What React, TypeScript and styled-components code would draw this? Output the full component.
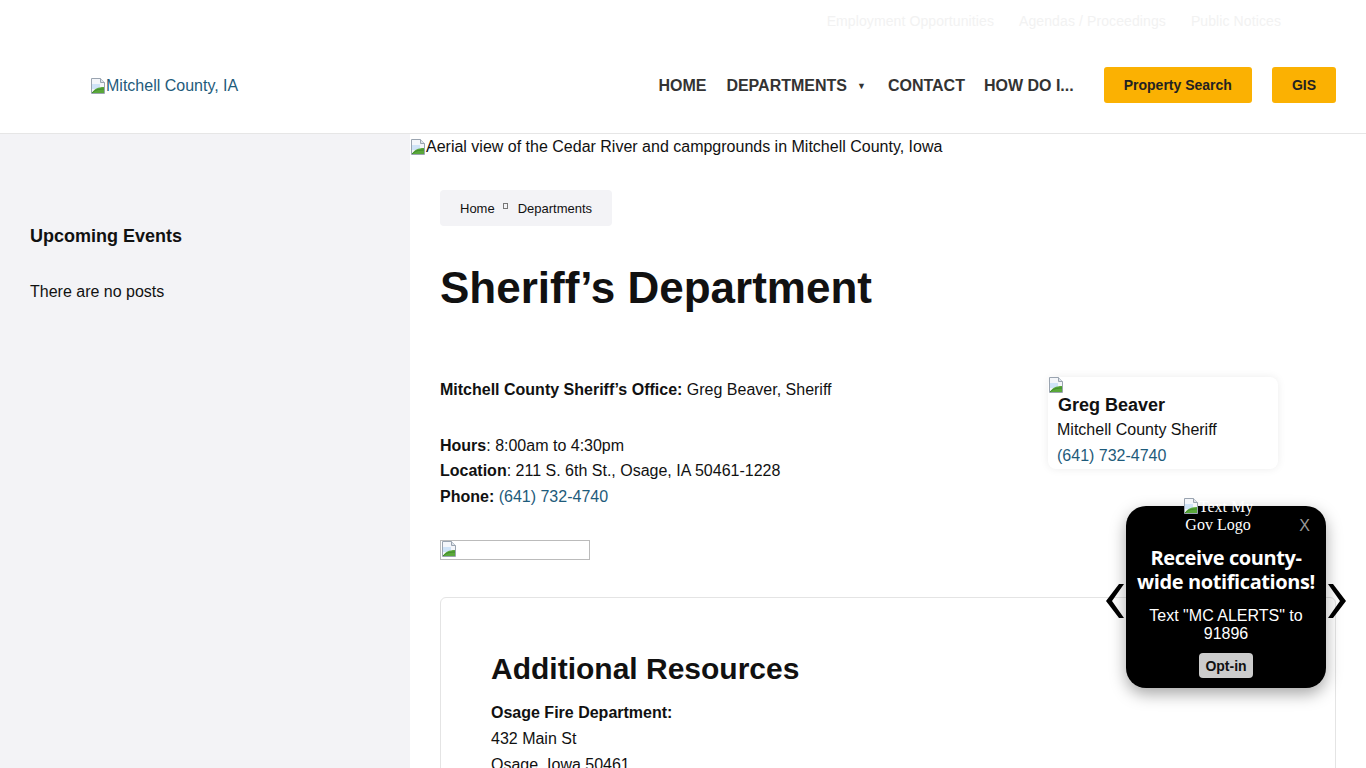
import React from "react";
import styled, { createGlobalStyle } from "styled-components";

const Global = createGlobalStyle`
  html, body { margin: 0; padding: 0; background: #fff; }
  body { font-family: "Liberation Sans", Arial, sans-serif; color: #111; font-size: 16px; overflow: hidden; }
  * { box-sizing: border-box; }
`;

const LINK = "#1e5b7b";

const Page = styled.div`
  width: 1366px;
  height: 768px;
  overflow: hidden;
  position: relative;
`;

const Header = styled.header`
  border-bottom: 1px solid #e6e6e6;
  padding-bottom: 4px;
`;

const TopBar = styled.div`
  height: 42px;
  display: flex;
  justify-content: flex-end;
  align-items: center;
  gap: 25px;
  padding-right: 85px;
`;

const TopLink = styled.a`
  font-size: 14px;
  letter-spacing: 0.1px;
  color: #f2f2f2;
  text-decoration: none;
`;

const NavRow = styled.div`
  height: 87px;
  display: flex;
  align-items: center;
  justify-content: space-between;
  padding: 1px 30px 0 90px;
`;

const Logo = styled.a`
  display: inline-flex;
  align-items: center;
  color: ${LINK};
  font-size: 16px;
  text-decoration: none;
`;

const Nav = styled.nav`
  display: flex;
  align-items: center;
`;

const NavItem = styled.a<{ $gap?: number }>`
  font-size: 16px;
  font-weight: 700;
  color: #333;
  text-transform: uppercase;
  text-decoration: none;
  margin-right: ${(p) => p.$gap ?? 20}px;
  display: inline-flex;
  align-items: center;
`;

const Caret = styled.span`
  font-size: 9px;
  margin-left: 10px;
  color: #333;
`;

const CtaButton = styled.a<{ $last?: boolean }>`
  height: 36px;
  padding: 0 20px;
  background: #fbb102;
  border-radius: 3px;
  font-size: 14px;
  font-weight: 700;
  color: #222;
  display: inline-flex;
  align-items: center;
  text-decoration: none;
  margin: -2px ${(p) => (p.$last ? 0 : 20)}px 0 0;
`;

const Body = styled.div`
  display: flex;
  height: 634px;
`;

const Sidebar = styled.aside`
  width: 410px;
  flex-shrink: 0;
  background: #f3f3f6;
  padding: 90px 30px 0;
`;

const SideTitle = styled.h3`
  margin: 0;
  font-size: 18px;
  font-weight: 700;
  line-height: 24px;
  color: #111;
`;

const SideText = styled.p`
  margin: 32px 0 0;
  font-size: 16px;
  line-height: 24px;
`;

const Main = styled.main`
  flex: 1;
  min-width: 0;
`;

const Hero = styled.div`
  height: 26px;
  display: flex;
  align-items: center;
  font-size: 16px;
  color: #111;
`;

const Content = styled.div`
  padding: 0 30px;
`;

const Crumbs = styled.div`
  margin-top: 30px;
  display: inline-flex;
  align-items: center;
  height: 36px;
  padding: 0 20px;
  background: #f3f3f6;
  border-radius: 4px;
  font-size: 13px;
  color: #111;
`;

const CrumbSep = styled.span`
  display: inline-block;
  width: 5px;
  height: 6px;
  border: 1px solid #777;
  margin: 0 10px 4px 8px;
`;

const Title = styled.h1`
  margin: 35px 0 0;
  font-size: 44px;
  line-height: 53px;
  font-weight: 700;
  color: #111;
`;

const InfoRow = styled.div`
  margin-top: 63px;
  display: flex;
  justify-content: space-between;
  align-items: flex-start;
`;

const Para = styled.p<{ $mt?: number }>`
  margin: ${(p) => p.$mt ?? 0}px 0 0;
  font-size: 16px;
  line-height: 25.6px;
`;

const Link = styled.a`
  color: ${LINK};
  text-decoration: none;
`;

const ProfileCard = styled.div`
  width: 230px;
  margin: 0 58px 0 0;
  background: #fff;
  border-radius: 8px;
  box-shadow: 0 0 8px rgba(0, 0, 0, 0.08);
  padding-bottom: 1px;
`;

const ProfileBody = styled.div`
  padding: 0 10px 0 9px;
`;

const ProfileName = styled.div`
  font-size: 18px;
  font-weight: 700;
  line-height: 24px;
  padding-left: 1px;
`;

const Placeholder = styled.div`
  margin-top: 31px;
  width: 150px;
  height: 20px;
  border: 1px solid #bbb;
  display: flex;
  align-items: flex-start;
`;

const ResourceCard = styled.section`
  margin-top: 37px;
  border: 1px solid #e4e4e4;
  border-radius: 6px;
  padding: 53px 50px;
`;

const CardTitle = styled.h2`
  margin: 0 0 13px;
  font-size: 30px;
  line-height: 36px;
  font-weight: 700;
`;

const Popup = styled.div`
  position: absolute;
  left: 1126px;
  top: 506px;
  width: 200px;
  height: 182px;
  background: #000;
  border-radius: 20px;
  box-shadow: 0 6px 16px rgba(0, 0, 0, 0.35);
  color: #fff;
  text-align: center;
`;

const PopLogo = styled.div`
  position: absolute;
  left: 51px;
  top: -8px;
  width: 82px;
  font-family: "Liberation Serif", "Times New Roman", serif;
  font-size: 16px;
  line-height: 18px;
  color: #fff;
  text-align: center;
`;

const PopClose = styled.span`
  position: absolute;
  right: 16px;
  top: 11px;
  font-size: 16px;
  color: #999;
`;

const PopTitle = styled.div`
  padding-top: 40px;
  font-family: "Open Sans", "Noto Sans", sans-serif;
  font-weight: 700;
  font-size: 20px;
  line-height: 24px;
  letter-spacing: -0.4px;
`;

const PopText = styled.div`
  margin-top: 13px;
  font-size: 16px;
  line-height: 18px;
`;

const OptIn = styled.button`
  margin-top: 10px;
  height: 25px;
  padding: 0 6px;
  border: none;
  border-radius: 4px;
  background: #ccc;
  color: #111;
  font-family: "Liberation Sans", Arial, sans-serif;
  font-size: 14px;
  font-weight: 700;
`;

const Arrow = styled.svg<{ $side: "l" | "r" }>`
  position: absolute;
  top: 77px;
  ${(p) => (p.$side === "l" ? "left: -21px;" : "right: -21px;")}
`;

const Icon = styled.svg`
  display: block;
  flex-shrink: 0;
`;

const InlineIcon = styled.svg`
  display: inline-block;
  vertical-align: -2px;
`;

const iconParts = (
  <>
    <path d="M1.5 0.5h9l4 4v11h-13z" fill="#f4f6fa" stroke="#9aa4b0" />
    <path d="M10.5 0.5v4h4" fill="#dde3ea" stroke="#9aa4b0" />
    <path d="M2 6h8v5H2z" fill="#cfe3f7" />
    <path d="M2 15c2-4 6-6 12-6v6z" fill="#5aa83a" />
    <path d="M2 15c3-3 6-4 12-4" stroke="#3f8a2a" fill="none" />
  </>
);

const BrokenImg = () => (
  <Icon width="16" height="16" viewBox="0 0 16 16">
    {iconParts}
  </Icon>
);

const BrokenImgInline = () => (
  <InlineIcon width="16" height="16" viewBox="0 0 16 16">
    {iconParts}
  </InlineIcon>
);

export default function App() {
  return (
    <Page>
      <Global />
      <Header>
        <TopBar>
          <TopLink>Employment Opportunities</TopLink>
          <TopLink>Agendas / Proceedings</TopLink>
          <TopLink>Public Notices</TopLink>
        </TopBar>
        <NavRow>
          <Logo>
            <BrokenImg />
            Mitchell County, IA
          </Logo>
          <Nav>
            <NavItem>Home</NavItem>
            <NavItem $gap={22}>
              Departments<Caret>▼</Caret>
            </NavItem>
            <NavItem $gap={19}>Contact</NavItem>
            <NavItem $gap={30}>How do I...</NavItem>
            <CtaButton>Property Search</CtaButton>
            <CtaButton $last>GIS</CtaButton>
          </Nav>
        </NavRow>
      </Header>
      <Body>
        <Sidebar>
          <SideTitle>Upcoming Events</SideTitle>
          <SideText>There are no posts</SideText>
        </Sidebar>
        <Main>
          <Hero>
            <BrokenImg />
            Aerial view of the Cedar River and campgrounds in Mitchell County, Iowa
          </Hero>
          <Content>
            <Crumbs>
              Home<CrumbSep />Departments
            </Crumbs>
            <Title>Sheriff’s Department</Title>
            <InfoRow>
              <div>
                <Para>
                  <b>Mitchell County Sheriff’s Office:</b> Greg Beaver, Sheriff
                </Para>
                <Para $mt={30}>
                  <b>Hours</b>: 8:00am to 4:30pm
                  <br />
                  <b>Location</b>: 211 S. 6th St., Osage, IA 50461-1228
                  <br />
                  <b>Phone:</b> <Link>(641) 732-4740</Link>
                </Para>
              </div>
              <ProfileCard>
                <BrokenImg />
                <ProfileBody>
                  <ProfileName>Greg Beaver</ProfileName>
                  <Para>Mitchell County Sheriff</Para>
                  <Para>
                    <Link>(641) 732-4740</Link>
                  </Para>
                </ProfileBody>
              </ProfileCard>
            </InfoRow>
            <Placeholder>
              <BrokenImg />
            </Placeholder>
            <ResourceCard>
              <CardTitle>Additional Resources</CardTitle>
              <Para>
                <b>Osage Fire Department:</b>
              </Para>
              <Para>432 Main St</Para>
              <Para>Osage, Iowa 50461</Para>
            </ResourceCard>
          </Content>
        </Main>
      </Body>
      <Popup>
        <PopLogo>
          <BrokenImgInline />
          Text My Gov Logo
        </PopLogo>
        <PopClose>X</PopClose>
        <Arrow $side="l" width="20" height="36" viewBox="0 0 20 36">
          <polygon points="19,1 14,1 1,18 14,35 19,35 7,18" fill="#000" />
        </Arrow>
        <Arrow $side="r" width="20" height="36" viewBox="0 0 20 36">
          <polygon points="1,1 6,1 19,18 6,35 1,35 13,18" fill="#000" />
        </Arrow>
        <PopTitle>
          Receive county-
          <br />
          wide notifications!
        </PopTitle>
        <PopText>
          Text "MC ALERTS" to
          <br />
          91896
        </PopText>
        <OptIn>Opt-in</OptIn>
      </Popup>
    </Page>
  );
}
